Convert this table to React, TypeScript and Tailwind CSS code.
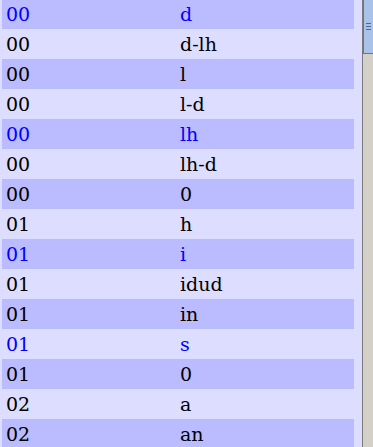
import React from "react";

const rows: [string, string, boolean][] = [
  ["00", "d", true],
  ["00", "d-lh", false],
  ["00", "l", false],
  ["00", "l-d", false],
  ["00", "lh", true],
  ["00", "lh-d", false],
  ["00", "0", false],
  ["01", "h", false],
  ["01", "i", true],
  ["01", "idud", false],
  ["01", "in", false],
  ["01", "s", true],
  ["01", "0", false],
  ["02", "a", false],
  ["02", "an", false],
];

export default function App() {
  return (
    <div className="flex h-[447px] w-[373px] overflow-hidden bg-[#ddddff]" style={{ fontFamily: '"DejaVu Serif", serif' }}>
      <div className="flex-1 pl-[2px] pr-[8px] -mt-px">
        {rows.map(([a, b, blue], i) => (
          <div
            key={i}
            className={`flex h-[30px] items-center text-[19px] ${i % 2 === 0 ? "bg-[#bbbbff]" : ""} ${blue ? "text-[#0000ff]" : "text-black"}`}
          >
            <div className="w-[178px] pl-[4px]">{a}</div>
            <div>{b}</div>
          </div>
        ))}
      </div>
      <div className="flex w-[11px] flex-col border-l border-[#7a7a7a] bg-[#d4d0c8]">
        <div className="flex h-[54px] flex-col items-center justify-center gap-[2px] border-b border-l border-[#5a78a8] bg-[#a9c2ea]">
          <div className="h-px w-[5px] bg-[#4a6898]" />
          <div className="h-px w-[5px] bg-[#4a6898]" />
          <div className="h-px w-[5px] bg-[#4a6898]" />
        </div>
      </div>
    </div>
  );
}
